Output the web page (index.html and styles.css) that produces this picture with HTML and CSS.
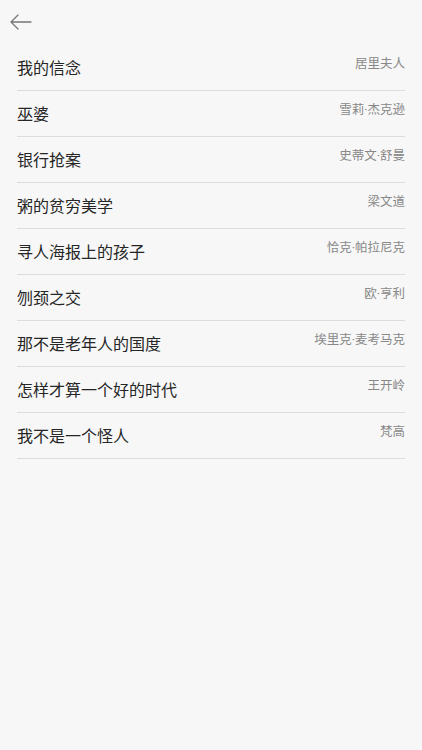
FILE: index.html
```html
<!DOCTYPE html>
<html lang="zh">
<head>
<meta charset="utf-8">
<link rel="stylesheet" href="styles.css">
</head>
<body>
<div class="page">
  <header class="topbar">
    <svg class="back" width="24" height="18" viewBox="0 0 24 18">
      <path d="M22 9H2 M9 2L2 9L9 16" fill="none" stroke="#777" stroke-width="1.3" stroke-linecap="round" stroke-linejoin="round"/>
    </svg>
  </header>
  <ul class="list">
    <li class="row"><span class="title">我的信念</span><span class="author">居里夫人</span></li>
    <li class="row"><span class="title">巫婆</span><span class="author">雪莉·杰克逊</span></li>
    <li class="row"><span class="title">银行抢案</span><span class="author">史蒂文·舒曼</span></li>
    <li class="row"><span class="title">粥的贫穷美学</span><span class="author">梁文道</span></li>
    <li class="row"><span class="title">寻人海报上的孩子</span><span class="author">恰克·帕拉尼克</span></li>
    <li class="row"><span class="title">刎颈之交</span><span class="author">欧·亨利</span></li>
    <li class="row"><span class="title">那不是老年人的国度</span><span class="author">埃里克·麦考马克</span></li>
    <li class="row"><span class="title">怎样才算一个好的时代</span><span class="author">王开岭</span></li>
    <li class="row"><span class="title">我不是一个怪人</span><span class="author">梵高</span></li>
  </ul>
</div>
</body>
</html>
```

FILE: styles.css
```css
html, body {
  margin: 0;
  padding: 0;
  background: #f7f7f7;
}
body {
  font-family: "Noto Sans CJK SC", "Noto Sans", sans-serif;
  width: 422px;
  height: 750px;
}
.topbar {
  height: 45px;
  display: flex;
  align-items: center;
  padding-left: 9px;
  box-sizing: border-box;
  padding-bottom: 1px;
}
.back {
  display: block;
}
.list {
  list-style: none;
  margin: 0 17px;
  padding: 0;
}
.row {
  display: flex;
  justify-content: space-between;
  align-items: flex-start;
  box-sizing: border-box;
  height: 46px;
  padding-top: 10px;
  border-bottom: 1px solid #dcdcdc;
}
.title {
  font-size: 16px;
  line-height: 24px;
  color: #262626;
}
.author {
  font-family: "Roboto", "Noto Sans CJK SC", sans-serif;
  font-size: 12.5px;
  line-height: 18px;
  color: #888;
}
```
